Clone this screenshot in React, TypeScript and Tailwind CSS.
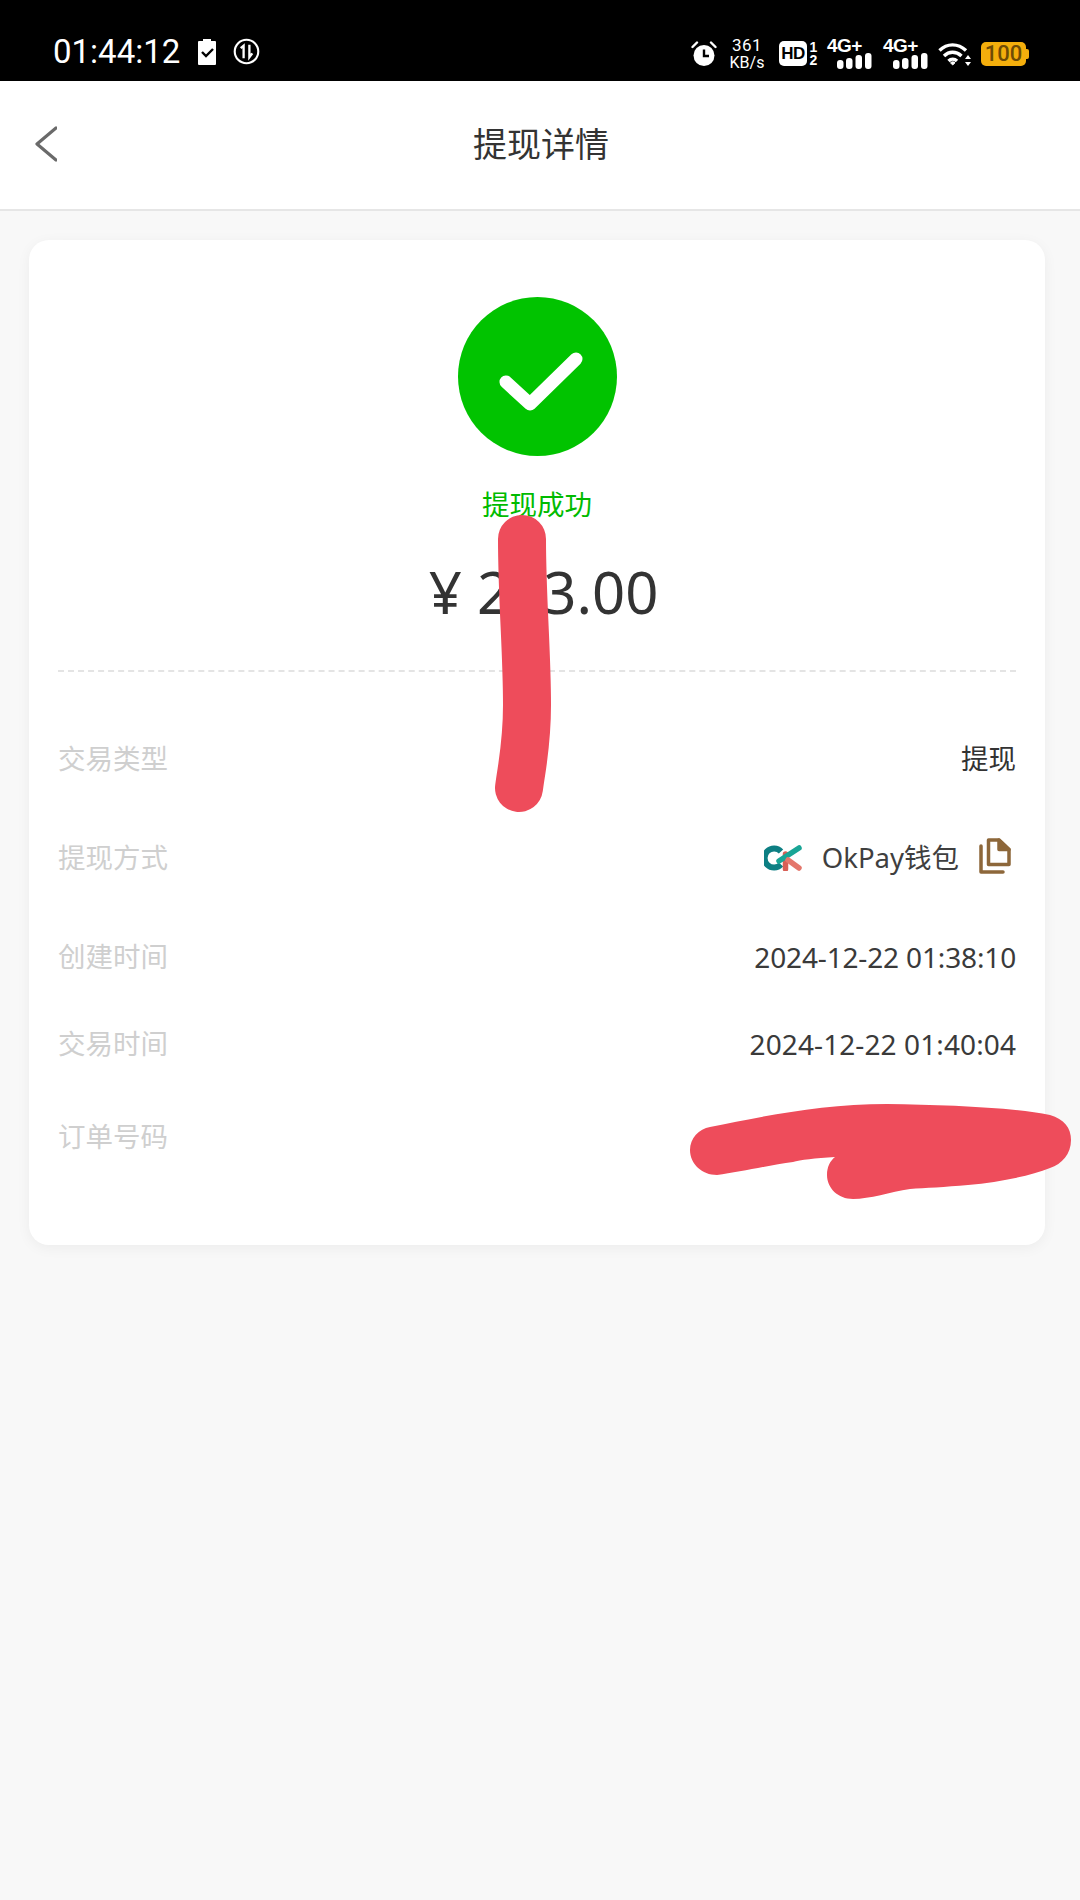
const CJK = "font-['Noto_Sans','Noto_Sans_CJK_SC',sans-serif]";

function Bars() {
  return (
    <svg width="35" height="16" viewBox="0 0 35 16" fill="white">
      <rect x="0" y="7" width="6.500" height="9" rx="3" />
      <rect x="9" y="5" width="6.500" height="11" rx="3" />
      <rect x="18.500" y="2" width="6.500" height="14" rx="3" />
      <rect x="28" y="0" width="6.500" height="16" rx="3" />
    </svg>
  );
}

function Net() {
  return (
    <div className="flex h-[31px] w-[44px] flex-col items-start">
      <span className="h-[15px] text-[19px] leading-[15px] font-bold tracking-[-0.5px] text-white font-['Liberation_Sans',sans-serif]">4G+</span>
      <div className="ml-[10px] flex">
        <Bars />
      </div>
    </div>
  );
}

function Row({ label, h, children }: { label: string; h: string; children?: React.ReactNode }) {
  return (
    <div className={`flex items-center justify-between ${h}`}>
      <span className="text-[27.500px] leading-none text-[#cfcfcf]">{label}</span>
      {children}
    </div>
  );
}

export default function App() {
  return (
    <div className={`relative min-h-[1900px] w-[1080px] overflow-hidden bg-[#f8f8f8] ${CJK}`}>
      <div className="flex h-[81px] items-center justify-between bg-black pt-[26px] pr-[54px] pl-[53px]">
        <div className="mb-[4px] flex items-center">
          <span className="text-[33px] leading-none text-white font-['Roboto',sans-serif]">01:44:12</span>
          <svg className="ml-[17px]" width="20" height="26" viewBox="0 0 20 26">
            <path d="M6 0h8v2h4a1 1 0 0 1 1 1v22a1 1 0 0 1-1 1H2a1 1 0 0 1-1-1V3a1 1 0 0 1 1-1h4z" fill="white" />
            <path d="M5 13l4 4 7-7" fill="none" stroke="black" strokeWidth="2.400" />
          </svg>
          <svg className="ml-[16px]" width="27" height="27" viewBox="0 0 28 28">
            <circle cx="14" cy="14" r="12.200" fill="none" stroke="white" strokeWidth="2.200" />
            <path d="M11 21V8L8 10.500M17 7v13l3-4" fill="none" stroke="white" strokeWidth="2.400" />
          </svg>
        </div>
        <div className="flex items-center">
          <svg width="26" height="26" viewBox="0 0 26 26">
            <circle cx="13" cy="14.500" r="10.500" fill="white" />
            <path d="M13 8.500v6.500h5" fill="none" stroke="black" strokeWidth="2.400" />
            <path d="M1.500 6L6 1.500M24.500 6L20 1.500" stroke="white" strokeWidth="2.400" strokeLinecap="round" />
          </svg>
          <div className="ml-[13px] flex w-[34px] flex-col items-center text-white font-['Roboto',sans-serif]">
            <span className="text-[17px] leading-[18px] tracking-[0.5px]">361</span>
            <span className="text-[16px] leading-[18px]">KB/s</span>
          </div>
          <div className="ml-[15px] flex h-[25px] w-[28px] items-center justify-center rounded-[5px] bg-white">
            <span className="text-[17px] leading-none font-bold tracking-[-0.5px] text-black font-['Liberation_Sans',sans-serif]">HD</span>
          </div>
          <div className="ml-[2px] flex w-[9px] flex-col items-center text-white font-['Liberation_Sans',sans-serif]">
            <span className="text-[14px] leading-[13px] font-bold">1</span>
            <span className="text-[14px] leading-[13px] font-bold">2</span>
          </div>
          <div className="ml-[9px] flex">
            <Net />
          </div>
          <div className="ml-[12px] flex">
            <Net />
          </div>
          <svg className="ml-[11px]" width="33" height="24" viewBox="0 0 33 24" fill="none" stroke="white" strokeWidth="3.400">
            <path d="M1.500 8.500C9 1 20 1 28 8.500" />
            <path d="M6 14C11 9 18 9 23.500 14" />
            <path d="M10.500 19C13 16.500 16.500 16.500 19 19" />
            <path d="M14.700 23L12.500 20.800C14 19.500 15.500 19.500 17 20.800z" fill="white" strokeWidth="1" />
            <path d="M30 13l-3 4h6zM30 24l-3-4h6z" fill="white" stroke="none" />
          </svg>
          <div className="relative ml-[10px] flex h-[24px] w-[45px] items-center justify-center rounded-[5px] bg-[#f4ae0c]">
            <span className="text-[22px] leading-none font-medium text-[#6e4b05] font-['Roboto',sans-serif]">100</span>
            <span className="absolute top-[7px] right-[-3px] h-[10px] w-[3px] rounded-r-[2px] bg-[#f4ae0c]" />
          </div>
        </div>
      </div>

      <div className="flex h-[130px] items-center justify-between border-b-2 border-[#e6e6e6] bg-white pr-[54px] pb-[2px] pl-[35px]">
        <svg width="22" height="36" viewBox="0 0 22 36" fill="none" stroke="#6a6a6a" strokeWidth="3.200" strokeLinecap="round" strokeLinejoin="round">
          <path d="M21 2L2 18l19 16" />
        </svg>
        <span className="text-[34px] leading-none text-[#333333]">提现详情</span>
        <span className="w-[1px]" />
      </div>

      <div className="mt-[29px] mr-[35px] ml-[29px] flex h-[1005px] flex-col rounded-[20px] bg-white px-[29px] pt-[57px] shadow-[0_3px_14px_rgba(0,0,0,0.05)]">
        <div className="flex flex-col items-center">
          <div className="flex h-[159px] w-[159px] items-center justify-center rounded-full bg-[#01c300]">
            <svg className="mt-[11px] ml-[7px]" width="84" height="62" viewBox="0 0 84 62" fill="none" stroke="white" strokeWidth="13" strokeLinecap="round" strokeLinejoin="round">
              <path d="M7 31L31 53L77 8" />
            </svg>
          </div>
          <span className="mt-[34px] text-[27.500px] leading-[30px] text-[#01bb00]">提现成功</span>
          <span className="mt-[37px] ml-[13px] text-[58px] leading-[70px] text-[#333333]">¥ 273.00</span>
        </div>
        <div className="mt-[43px] border-t-2 border-dashed border-[#e4e4e4]" />
        <div className="mt-[37px] flex flex-col">
          <Row label="交易类型" h="h-[100px]">
            <span className="text-[27.500px] leading-none text-[#333333]">提现</span>
          </Row>
          <Row label="提现方式" h="h-[98px]">
            <div className="mr-[5px] flex items-center">
              <svg width="38" height="26" viewBox="0 0 38 26" fill="none">
                <path d="M17 6.500A9.500 9.500 0 1 0 17 19.500" stroke="#0d7f83" strokeWidth="6" />
                <path d="M21.500 9V24" stroke="#d85f56" strokeWidth="5.500" strokeLinecap="round" />
                <path d="M15 16L35 3" stroke="#19a596" strokeWidth="5.500" strokeLinecap="round" />
                <path d="M24 15L35 23" stroke="#e4776c" strokeWidth="5.500" strokeLinecap="round" />
              </svg>
              <span className="ml-[20px] text-[27.500px] leading-none text-[#3f3f3f]">OkPay钱包</span>
              <svg className="mb-[5px] ml-[20px]" width="32" height="36" viewBox="0 0 32 36" fill="none">
                <path d="M9.500 2H20L30 11.500V26.500H9.500z" stroke="#8d673a" strokeWidth="3.500" strokeLinejoin="round" />
                <path d="M20 2V11.500H30z" fill="#8d673a" stroke="#8d673a" strokeWidth="3.500" strokeLinejoin="round" />
                <path d="M2 8V34H24" stroke="#8d673a" strokeWidth="3.500" strokeLinecap="round" strokeLinejoin="round" />
              </svg>
            </div>
          </Row>
          <Row label="创建时间" h="h-[100px]">
            <span className="text-[28px] leading-none tracking-[-0.15px] text-[#3a3a3a]">2024-12-22 01:38:10</span>
          </Row>
          <Row label="交易时间" h="h-[74px]">
            <span className="text-[28px] leading-none tracking-[0.1px] text-[#3a3a3a]">2024-12-22 01:40:04</span>
          </Row>
          <Row label="订单号码" h="h-[112px]" />
        </div>
      </div>

      <svg className="pointer-events-none absolute top-0 left-0" width="1080" height="1900" viewBox="0 0 1080 1900" fill="none">
        <path d="M522 539C522 600 527 650 527 705C527 745 522 765 519 788" stroke="#ee4c5b" strokeWidth="48" strokeLinecap="round" />
        <path
          d="M710 1127C760 1117 820 1104 887 1104C945 1105 1010 1107 1050 1115C1064 1119 1071 1128 1071 1140C1071 1154 1062 1164 1050 1168C1030 1176 1000 1182 968 1185C945 1187 925 1188 910 1189C890 1192 870 1199 853 1199C838 1199 827 1188 827 1175C827 1167 830 1161 835 1157C815 1158 800 1160 793 1162C770 1165 740 1172 717 1175C702 1175 690 1164 690 1150C690 1138 699 1129 710 1127Z"
          fill="#ee4c5b"
        />
      </svg>
    </div>
  );
}
